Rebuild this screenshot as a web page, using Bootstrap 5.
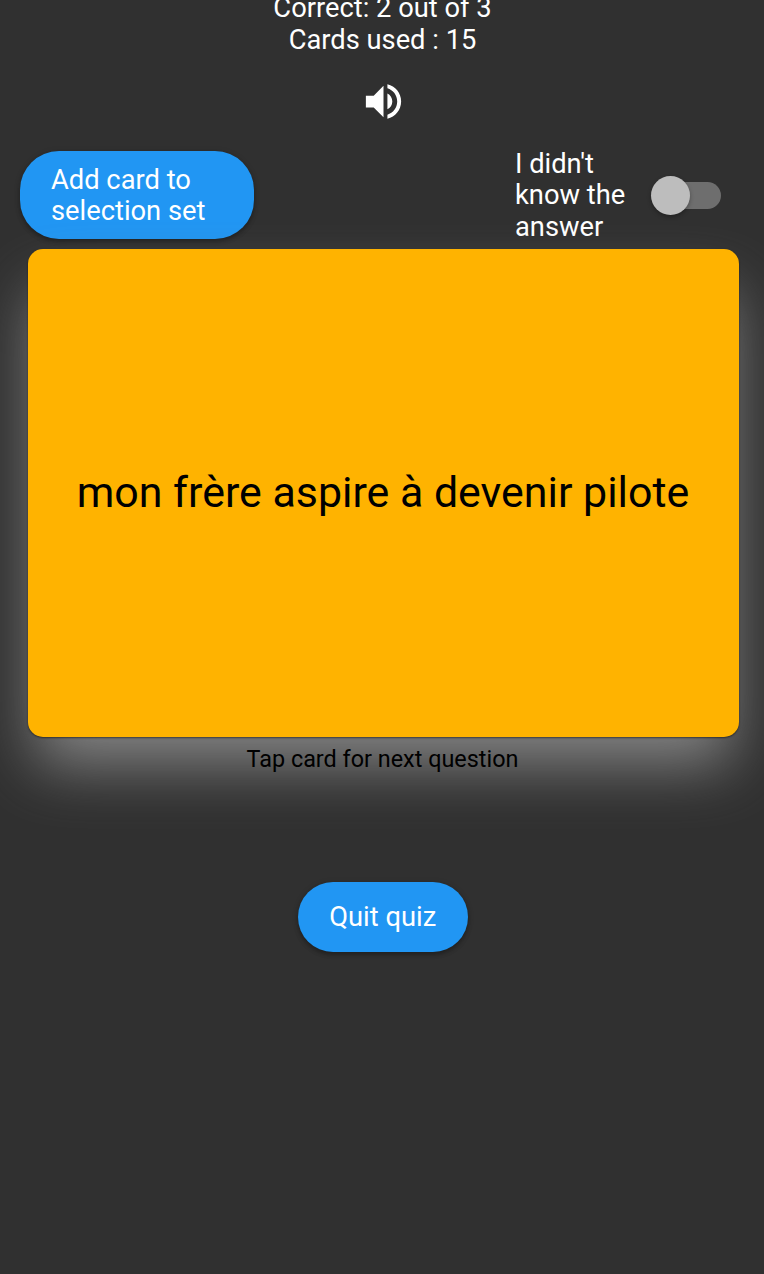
<!DOCTYPE html>
<html lang="en">
<head>
<meta charset="utf-8">
<meta name="viewport" content="width=device-width, initial-scale=1">
<title>Quiz</title>
<link href="https://cdn.jsdelivr.net/npm/bootstrap@5.3.0/dist/css/bootstrap.min.css" rel="stylesheet">
<style>
  body { background: #303030; color: #fff; font-family: Roboto, sans-serif; font-size: 27.3px; line-height: 31.3px; }
  .quiz-screen { height: 1274px; }
  .score { height: 56px; margin-left: 1px; }
  .speaker { width: 47px; height: 47px; margin-top: 22px; margin-left: 2px; fill: #fff; }
  .controls { height: 88px; margin-top: 26px; padding-left: 19.5px; padding-right: 43px; }
  .btn-quiz { --bs-btn-color: #fff; --bs-btn-bg: #2196f3; --bs-btn-hover-color: #fff; --bs-btn-hover-bg: #1e88e5; border: 0; font-size: inherit; line-height: inherit; box-shadow: 0 3px 4px rgba(0,0,0,.25), 0 1px 6px rgba(0,0,0,.15); }
  .btn-add { width: 234px; height: 87.5px; padding: 2px 31.5px 0; border-radius: 39px; }
  .btn-quit { width: 170px; height: 70px; margin-top: 106.500px; margin-left: 1.500px; border-radius: 35px; padding: 2px 0 0; }
  .unknown-text { width: 118px; margin-right: 18px; padding-top: 2px; }
  .toggle { width: 70px; height: 39px; }
  .toggle-track { width: 64px; height: 27px; background: #6e6e6e; }
  .toggle-thumb { width: 39px; height: 39px; background: #bdbdbd; box-shadow: 0 2px 4px rgba(0,0,0,.3); }
  .flashcard { height: 488px; margin: 10px 25.5px 0 27.5px; padding-bottom: 2px; border: 0; border-radius: 15px; background: #ffb300; color: #000; font-size: 42.9px; line-height: 50px; box-shadow: 0 1px 2px rgba(0,0,0,.5), 0 34px 62px -7px #868686; }
  .hint { margin-top: 7px; margin-left: 1px; color: #000; font-size: 23.4px; z-index: 1; }
</style>
</head>
<body>
<main class="quiz-screen d-flex flex-column align-items-center overflow-hidden">
  <div class="score d-flex flex-column justify-content-end text-center flex-shrink-0">
    <div>Correct: 2 out of 3</div>
    <div>Cards used : 15</div>
  </div>
  <svg class="speaker flex-shrink-0" viewBox="0 0 24 24" role="img" aria-label="Play sound">
    <path d="M3 9v6h4l5 5V4L7 9H3zm13.500 3c0-1.770-1.020-3.290-2.500-4.030v8.050c1.480-.730 2.500-2.250 2.500-4.020zM14 3.230v2.060c2.890.860 5 3.540 5 6.710s-2.110 5.850-5 6.710v2.060c4.010-.910 7-4.490 7-8.770s-2.990-7.860-7-8.770z"/>
  </svg>
  <div class="controls d-flex w-100 align-items-center justify-content-between flex-shrink-0">
    <button type="button" class="btn btn-quiz btn-add text-start">Add card to<br>selection set</button>
    <div class="d-flex align-items-center">
      <div class="unknown-text">I didn't know the answer</div>
      <div class="toggle position-relative d-flex align-items-center justify-content-end" role="switch" aria-checked="false" aria-label="I didn't know the answer">
        <span class="toggle-track rounded-pill"></span>
        <span class="toggle-thumb rounded-circle position-absolute top-0 start-0"></span>
      </div>
    </div>
  </div>
  <div class="flashcard card align-self-stretch justify-content-center text-center flex-shrink-0">mon frère aspire à devenir pilote</div>
  <div class="hint position-relative">Tap card for next question</div>
  <button type="button" class="btn btn-quiz btn-quit">Quit quiz</button>
</main>
<script src="https://cdn.jsdelivr.net/npm/bootstrap@5.3.0/dist/js/bootstrap.bundle.min.js"></script>
</body>
</html>
